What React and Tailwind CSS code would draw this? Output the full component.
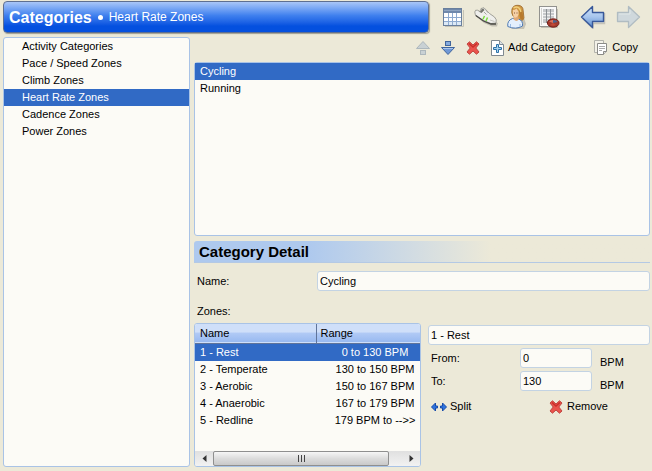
import { useState } from "react";

const sections = [
  "Activity Categories",
  "Pace / Speed Zones",
  "Climb Zones",
  "Heart Rate Zones",
  "Cadence Zones",
  "Power Zones",
];

const zones = [
  { name: "1 - Rest", range: "0 to 130 BPM" },
  { name: "2 - Temperate", range: "130 to 150 BPM" },
  { name: "3 - Aerobic", range: "150 to 167 BPM" },
  { name: "4 - Anaerobic", range: "167 to 179 BPM" },
  { name: "5 - Redline", range: "179 BPM to -->>" },
];

const field =
  "h-5 min-w-0 rounded-[3px] border border-[#c3d3e3] bg-[#fcfbf6] px-0.5 text-black outline-none";

function CalendarIcon() {
  return (
    <svg width="22" height="22" viewBox="0 0 22 22">
      <path d="M3 20.5H21.5V4" fill="none" stroke="#c5c3b6" />
      <rect x="1.5" y="2.5" width="18" height="17" fill="#fff" stroke="#697f9d" />
      <rect x="2" y="3" width="17" height="4" fill="#6f88ab" />
      <path d="M2 4.5H19" stroke="#8ea4c1" />
      <path d="M2 15H19V19H2Z" fill="#dce9f6" />
      <path d="M2 11.5H19M2 15.5H19M6.5 7V19M10.5 7V19M14.5 7V19" stroke="#8fabd0" />
    </svg>
  );
}

function ShoeIcon() {
  return (
    <svg width="24" height="22" viewBox="0 0 24 22">
      <path d="M3 11L10 17L18 20.5L23 20.5L24 17L16 15Z" fill="#c2bfb2" />
      <path d="M0.8 6Q1 3.5 3.5 4.2L5.5 5.2Q7 5 7 2.5L10 1.8L15.5 7.5L20.5 11Q23.2 13.5 22 17L17 17.5L9.5 14.5L1.5 9.5Z" fill="#efefec" stroke="#8b8b84" strokeWidth="0.8" />
      <path d="M4.5 5.5Q7.5 6 7.5 3.2L9.5 2.8L10.5 4L7.5 7Z" fill="#75766f" />
      <path d="M1.8 9.5L9.5 15L17 18H22" fill="none" stroke="#4b4b46" strokeWidth="1.3" />
      <path d="M10 6L12.5 8.5M12 4.5L14.5 7" stroke="#a5a5a0" />
      <path d="M10.5 10L9 13.2M13.5 11.5L12 15" stroke="#7bdc3f" strokeWidth="1.5" />
      <path d="M16 14L20.5 15.5" stroke="#c5c5c0" />
    </svg>
  );
}

function PersonIcon() {
  return (
    <svg width="22" height="26" viewBox="0 0 22 26">
      <path d="M5 25H18L20 20L18 14Z" fill="#c6c2b4" />
      <path d="M6 5Q7.5 1 12 1.3Q17.2 1.5 17.2 7L18 14Q17.5 17 13.5 16.5L11 13L7 12Q5 9 6 5Z" fill="#d09a45" stroke="#9a6526" strokeWidth="0.8" />
      <path d="M1.8 22.5Q1 16.5 6.5 14.5L12.5 15Q17.2 16.5 16.5 22Q10 26 1.8 22.5Z" fill="#e3effd" stroke="#517bb3" />
      <path d="M7.5 12H12L13 15Q10.5 19 7.5 15Z" fill="#dfa877" />
      <path d="M6.8 6Q9 6 10.5 4.5L12.5 7.5V11Q11 14 8.8 13.8Q6.5 12 6.8 6Z" fill="#f6d0a6" />
      <path d="M13.2 6Q13 12 14.5 15.5H17Q17.5 12 16.3 7Z" fill="#b87a2c" />
      <path d="M7.5 4Q11 1.8 13.5 4.5L15 8" fill="none" stroke="#f2d07c" strokeWidth="1.4" />
      <path d="M8 9H9M10.5 9H11.5" stroke="#7d5337" />
      <path d="M4.5 23V20M14 23V20" stroke="#9bbce4" />
    </svg>
  );
}

function ReportIcon() {
  return (
    <svg width="22" height="24" viewBox="0 0 22 24">
      <path d="M3 22.5H19.5V4" fill="none" stroke="#c4c1b4" />
      <rect x="1.5" y="1.5" width="17" height="20" fill="#fafafa" stroke="#92928e" />
      <path d="M3.5 3V20" stroke="#d3d3d0" />
      <rect x="5" y="4" width="11" height="14" fill="#c7c9cb" />
      <path d="M5 7.5H16M5 10.5H16M5 13.5H16" stroke="#efefef" />
      <path d="M8.5 4V18M12.5 4V18" stroke="#8b9094" />
      <ellipse cx="15.2" cy="18" rx="5.8" ry="4.2" fill="#a33a2e" stroke="#74211b" />
      <path d="M15 18L11 16.5Q13 14.5 15 15Z" fill="#d9725f" />
      <path d="M15 18V15Q19 15 19.5 17Z" fill="#4c638f" />
      <path d="M12 20L15 18L18 20Q15 21.5 12 20Z" fill="#c14a38" />
    </svg>
  );
}

function BackIcon() {
  return (
    <svg width="26" height="24" viewBox="0 0 26 24">
      <defs>
        <linearGradient id="back" x1="0" y1="0" x2="0" y2="1">
          <stop offset="0" stopColor="#d0e3fa" />
          <stop offset="0.5" stopColor="#a7c5ed" />
          <stop offset="1" stopColor="#5b8cce" />
        </linearGradient>
      </defs>
      <path d="M3 14L13 23.5V18.5H24.5V8" fill="none" stroke="#c5c3b8" strokeWidth="1.5" />
      <path d="M1.5 12L12.5 1.5V7.5H23.5V16.5H12.5V22.5Z" fill="url(#back)" stroke="#38589a" strokeWidth="1.4" strokeLinejoin="round" />
    </svg>
  );
}

function ForwardIcon() {
  return (
    <svg width="26" height="24" viewBox="0 0 26 24">
      <path d="M24.5 12L13.5 1.5V7.5H2.5V16.5H13.5V22.5Z" fill="#cfd8dc" stroke="#b0bcc2" strokeWidth="1.3" strokeLinejoin="round" />
      <path d="M4 9H15V5" fill="none" stroke="#e1e7e7" />
    </svg>
  );
}

function UpIcon() {
  return (
    <svg width="16" height="16" viewBox="0 0 16 16">
      <path d="M1.5 8.5L8 1.5L14.5 8.5Z" fill="#c9d1d4" stroke="#adb7bc" strokeLinejoin="round" />
      <rect x="5.5" y="10.5" width="5" height="4" fill="#c9d1d4" stroke="#adb7bc" />
    </svg>
  );
}

function DownIcon() {
  return (
    <svg width="16" height="16" viewBox="0 0 16 16">
      <path d="M1.5 7.5L8 14.5L14.5 7.5Z" fill="#6f98d6" stroke="#41659c" strokeLinejoin="round" />
      <path d="M3 8.5H13" stroke="#a9c6ee" />
      <rect x="5.5" y="1.5" width="5" height="4" fill="#84aade" stroke="#41659c" />
    </svg>
  );
}

function CrossIcon() {
  return (
    <svg width="16" height="16" viewBox="0 0 16 16">
      <path d="M2 4L4.5 1.8L8 5L11.5 1.8L14 4L10.8 8L14 12L11.5 14.2L8 11L4.5 14.2L2 12L5.2 8Z" fill="#ea544d" stroke="#c04640" strokeLinejoin="round" />
      <path d="M4 3.5L8 7L12 3.5" fill="none" stroke="#c9302b" strokeWidth="1.5" />
    </svg>
  );
}

function AddIcon() {
  return (
    <svg width="16" height="16" viewBox="0 0 16 16">
      <path d="M1.5 0.5H9.5L13.5 4.5V15.5H1.5Z" fill="#fff" stroke="#7f8990" />
      <path d="M9.5 0.5V4.5H13.5" fill="#dce2e5" stroke="#7f8990" />
      <path d="M6.5 4.5H8.5V7.5H11.5V9.5H8.5V12.5H6.5V9.5H3.5V7.5H6.5Z" fill="#a6d2f0" stroke="#2c72a8" />
    </svg>
  );
}

function CopyIcon() {
  return (
    <svg width="16" height="16" viewBox="0 0 16 16">
      <path d="M2.5 0.5H11.5V12.5H2.5Z" fill="#f3f1e8" stroke="#b3b3ac" />
      <path d="M5.5 3.5H14.5V11.5L11.5 14.5H5.5Z" fill="#fff" stroke="#8b8b87" />
      <path d="M14.5 11.5H11.5V14.5" fill="#ddd" stroke="#8b8b87" />
      <path d="M7 6.5H13M7 8.5H13M7 10.5H10" stroke="#aaa" />
    </svg>
  );
}

function SplitIcon() {
  return (
    <svg width="16" height="10" viewBox="0 0 16 10">
      <path d="M0.5 5L4.5 1V4H6.5V6H4.5V9Z" fill="#2d73df" stroke="#164ba9" strokeLinejoin="round" />
      <path d="M15.5 5L11.5 1V4H9.5V6H11.5V9Z" fill="#2d73df" stroke="#164ba9" strokeLinejoin="round" />
    </svg>
  );
}

function ScrollBar() {
  return (
    <div className="flex h-[15px] items-center bg-gradient-to-b from-[#e0e0e0] to-[#f2f2f2]">
      <button aria-label="Scroll left" className="flex w-[18px] justify-center">
        <svg width="5" height="7" viewBox="0 0 5 7"><path d="M4.5 0V7L0.5 3.5Z" fill="#333" /></svg>
      </button>
      <div className="flex h-[15px] w-44 items-center justify-center rounded-[2px] border border-[#8f8f8f] bg-gradient-to-b from-[#f6f6f6] via-[#dcdcdc] to-[#c9c9c9]">
        <span className="mx-px h-[7px] w-px bg-[#444]" />
        <span className="mx-px h-[7px] w-px bg-[#444]" />
        <span className="mx-px h-[7px] w-px bg-[#444]" />
      </div>
      <div className="flex-1" />
      <button aria-label="Scroll right" className="flex w-[18px] justify-center">
        <svg width="5" height="7" viewBox="0 0 5 7"><path d="M0.5 0V7L4.5 3.5Z" fill="#333" /></svg>
      </button>
    </div>
  );
}

function ZoneTable({ selected, onSelect }) {
  return (
    <div className="flex w-[227px] shrink-0 flex-col overflow-hidden rounded-[3px] border border-[#a9c3e6] bg-[#fcfbf6]">
      <table className="w-full table-fixed border-collapse text-left">
        <thead>
          <tr className="h-[19px] border-b border-[#60749a] bg-gradient-to-b from-[#cfdff9] from-45% via-[#b1caf5] via-50% to-[#98b9f0]">
            <th className="w-[121px] border-r border-[#60749a] p-0 pl-[5px] font-normal">Name</th>
            <th className="p-0 pl-1 font-normal">Range</th>
          </tr>
        </thead>
        <tbody>
          {zones.map((zone, i) => (
            <tr
              key={zone.name}
              onClick={() => onSelect(i)}
              className={i === selected ? "h-[17px] bg-[#316ac5] text-white" : "h-[17px]"}
            >
              <td className="p-0 pl-[5px]">{zone.name}</td>
              <td className="p-0 pl-[14px] text-center whitespace-nowrap">{zone.range}</td>
            </tr>
          ))}
        </tbody>
      </table>
      <div className="flex-1" />
      <ScrollBar />
    </div>
  );
}

export default function App() {
  const [section, setSection] = useState(3);
  const [category, setCategory] = useState(0);
  const [zone, setZone] = useState(0);

  return (
    <div className="flex min-h-screen flex-col bg-[#ece9d8] pt-px pr-0.5 pb-1 pl-[3px] font-['Liberation_Sans',Arial,sans-serif] text-[11px] leading-[17px] text-black">
      <header className="flex items-start">
        <h1 className="flex h-8 flex-1 items-center gap-1.5 rounded-[4px] border border-[#5e6f91] bg-gradient-to-b from-[#a9c6f8] via-[#3f80ee] via-45% to-[#0450df] to-80% pl-[5px] text-white shadow-[1px_1px_1px_#a09e92]">
          <span className="text-[16px] font-bold">Categories</span>
          <span className="size-[5px] rounded-full bg-white" />
          <span className="text-[12px]">Heart Rate Zones</span>
        </h1>
        <div className="flex h-9 w-[221px] shrink-0 items-center pb-1 pl-[13px]">
          <button aria-label="Calendar" className="w-8"><CalendarIcon /></button>
          <button aria-label="Equipment" className="w-8"><ShoeIcon /></button>
          <button aria-label="Athlete" className="w-8"><PersonIcon /></button>
          <button aria-label="Reports" className="w-[42px]"><ReportIcon /></button>
          <button aria-label="Back" className="w-[35px]"><BackIcon /></button>
          <button aria-label="Forward"><ForwardIcon /></button>
        </div>
      </header>

      <div className="flex flex-1 gap-1">
        <nav className="w-[187px] shrink-0 rounded-[3px] border border-[#a9c3e6] bg-[#fcfbf6]">
          {sections.map((label, i) => (
            <button
              key={label}
              onClick={() => setSection(i)}
              className={
                i === section
                  ? "block w-full bg-[#316ac5] pl-[18px] text-left text-white"
                  : "block w-full pl-[18px] text-left"
              }
            >
              {label}
            </button>
          ))}
        </nav>

        <main className="flex min-w-0 flex-1 flex-col">
          <div className="flex h-[25px] items-center justify-end gap-[9px] pr-3 pb-1">
            <button aria-label="Move up"><UpIcon /></button>
            <button aria-label="Move down"><DownIcon /></button>
            <button aria-label="Delete"><CrossIcon /></button>
            <button className="flex items-center gap-0.5"><AddIcon />Add Category</button>
            <button className="ml-2 flex items-center gap-1"><CopyIcon />Copy</button>
          </div>

          <div className="h-[174px] rounded-[3px] border border-[#a9c3e6] bg-[#fcfbf6]">
            {["Cycling", "Running"].map((label, i) => (
              <button
                key={label}
                onClick={() => setCategory(i)}
                className={
                  i === category
                    ? "block w-full bg-[#316ac5] pl-[5px] text-left text-white"
                    : "block w-full pl-[5px] text-left"
                }
              >
                {label}
              </button>
            ))}
          </div>

          <h2 className="mt-[5px] h-[22px] rounded-t-[3px] border-b border-[#b4c9e4] bg-gradient-to-r from-[#aec9ee] from-25% to-[#ece9d8] to-65% pl-[5px] text-[15px] leading-[22px] font-bold">
            Category Detail
          </h2>

          <div className="mt-2 flex items-center pl-[3px]">
            <label htmlFor="category-name" className="w-[120px]">Name:</label>
            <input id="category-name" defaultValue="Cycling" className={`${field} flex-1`} />
          </div>

          <h3 className="mt-3 pl-[3px] pb-[3px]">Zones:</h3>

          <div className="flex flex-1 gap-[7px]">
            <ZoneTable selected={zone} onSelect={setZone} />
            <div className="flex min-w-0 flex-1 flex-col gap-[3px] pt-0.5">
              <input aria-label="Zone name" defaultValue="1 - Rest" className={field} />
              <div className="flex h-5 items-center pl-[3px]">
                <label htmlFor="zone-from" className="w-[89px]">From:</label>
                <input id="zone-from" defaultValue="0" className={`${field} w-[72px]`} />
                <span className="pt-2 pl-2">BPM</span>
              </div>
              <div className="flex h-5 items-center pl-[3px]">
                <label htmlFor="zone-to" className="w-[89px]">To:</label>
                <input id="zone-to" defaultValue="130" className={`${field} w-[72px]`} />
                <span className="pt-2 pl-2">BPM</span>
              </div>
              <div className="mt-1 flex pl-[3px]">
                <button className="flex w-[117px] items-center gap-[3px]"><SplitIcon />Split</button>
                <button className="flex items-center gap-[3px]"><CrossIcon />Remove</button>
              </div>
            </div>
          </div>
        </main>
      </div>
    </div>
  );
}
